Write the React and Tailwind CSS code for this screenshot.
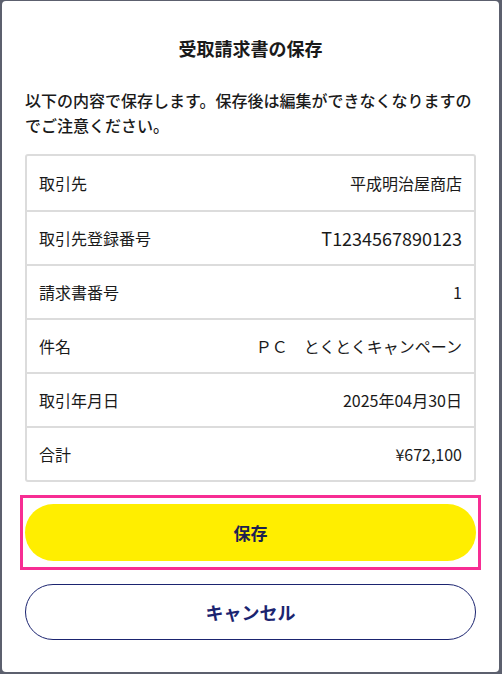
export default function App() {
  const rows = [
    ["取引先", "平成明治屋商店", "text-[16px]"],
    ["取引先登録番号", "T1234567890123", "text-[18px]"],
    ["請求書番号", "1", "text-[16px]"],
    ["件名", "ＰＣ　とくとくキャンペーン", "text-[16px]"],
    ["取引年月日", "2025年04月30日", "text-[16px]"],
    ["合計", "¥672,100", "text-[16px]"],
  ];
  return (
    <div
      className="w-[502px] h-[674px] bg-[#5c606e] pl-[2px] pt-[1px] pr-[3px] pb-[2px]"
      style={{ fontFamily: '"Noto Sans CJK JP", "Noto Sans", sans-serif' }}
    >
      <div className="h-full bg-white rounded-[4px] px-[23px] pt-[34px] flex flex-col text-[#1a1a1a]">
        <h1 className="text-center text-[18px] leading-[26px] font-bold">受取請求書の保存</h1>
        <p className="mt-[27px] text-[16px] leading-[25px] font-medium">
          以下の内容で保存します。保存後は編集ができなくなりますのでご注意ください。
        </p>
        <div className="mt-[16px] border-2 border-[#dcdcdc] rounded-[3px]">
          {rows.map(([k, v, s], i) => (
            <div
              key={k}
              className={`flex items-center justify-between h-[54px] pl-[12px] pr-[12px] text-[16px] ${i > 0 ? "border-t-2 border-[#dcdcdc]" : ""}`}
            >
              <span>{k}</span>
              <span className={s}>{v}</span>
            </div>
          ))}
        </div>
        <div className="mt-[13px] -mx-[5px] border-[3px] border-[#f72d93] px-[2px] py-[6px]">
          <button className="w-full h-[57px] rounded-full bg-[#ffee00] text-[#1c2150] text-[17px] font-bold">
            保存
          </button>
        </div>
        <button className="mt-[14px] w-full h-[56px] rounded-full border border-[#1b2470] text-[#1b2470] text-[18px] font-bold bg-white">
          キャンセル
        </button>
      </div>
    </div>
  );
}
